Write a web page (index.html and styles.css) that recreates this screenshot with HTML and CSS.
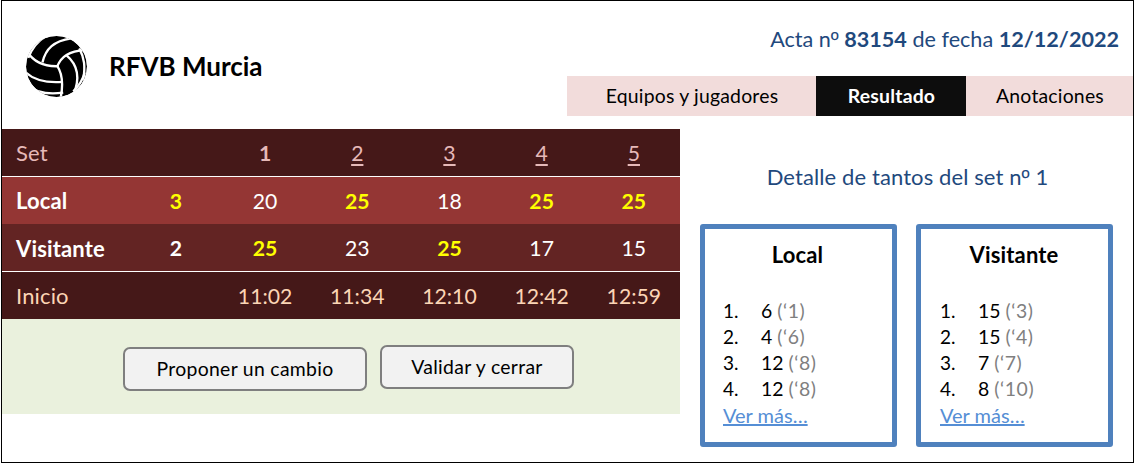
FILE: index.html
```html
<!DOCTYPE html>
<html lang="es">
<head>
<meta charset="utf-8">
<title>RFVB Murcia</title>
<link rel="stylesheet" href="styles.css">
</head>
<body>
<div class="frame">
  <header class="header">
    <div class="brand">
      <svg class="ball" viewBox="76 102 188 188" aria-hidden="true">
        <defs><clipPath id="disc"><circle cx="170" cy="196" r="91"/></clipPath></defs>
        <g clip-path="url(#disc)">
          <circle cx="170" cy="196" r="91"/>
          <g class="seams">
            <path d="M78 145Q108 198 176 195"/>
            <path d="M172 196C184 166 206 150 256 147"/>
            <path d="M172 194Q195 228 182 292"/>
            <path d="M128 184C138 142 162 120 214 112"/>
            <path d="M86 170C96 142 110 122 140 104"/>
            <path d="M74 210C102 238 145 245 187 242"/>
            <path d="M80 252C112 276 150 280 190 274"/>
            <path d="M200 163C232 190 242 230 220 282"/>
            <path d="M238 142C254 172 256 196 250 236"/>
            <path d="M190 100Q226 110 250 146"/>
            <path d="M76 222Q90 254 122 280"/>
            <path d="M254 214Q246 246 220 270"/>
          </g>
        </g>
      </svg>
      <h1 class="brand-name">RFVB Murcia</h1>
    </div>
    <div class="header-right">
      <p class="record">Acta n<span class="ordinal">º</span> <b>83154</b> de fecha <b>12/12/2022</b></p>
      <nav class="tabs">
        <a class="tab tab-teams">Equipos y jugadores</a>
        <a class="tab tab-active">Resultado</a>
        <a class="tab tab-notes">Anotaciones</a>
      </nav>
    </div>
  </header>
  <main class="main">
    <section class="score">
      <div class="row row-sets"><span class="name">Set</span><span></span><b>1</b><u>2</u><u>3</u><u>4</u><u>5</u></div>
      <div class="row row-local"><b class="name">Local</b><b class="win">3</b><span>20</span><b class="win">25</b><span>18</span><b class="win">25</b><b class="win">25</b></div>
      <div class="row row-visitor"><b class="name">Visitante</b><b>2</b><b class="win">25</b><span>23</span><b class="win">25</b><span>17</span><span>15</span></div>
      <div class="row row-start"><span class="name">Inicio</span><span></span><span>11:02</span><span>11:34</span><span>12:10</span><span>12:42</span><span>12:59</span></div>
      <div class="actions">
        <button class="button button-propose">Proponer un cambio</button>
        <button class="button button-close">Validar y cerrar</button>
      </div>
    </section>
    <section class="detail">
      <h2 class="detail-title">Detalle de tantos del set n<span class="ordinal">º</span> 1</h2>
      <div class="cards">
        <article class="card">
          <h3 class="card-title">Local</h3>
          <div class="points">
            <div class="point"><span>1.</span><span class="value">6 <i>(‘1)</i></span></div>
            <div class="point"><span>2.</span><span class="value">4 <i>(‘6)</i></span></div>
            <div class="point"><span>3.</span><span class="value">12 <i>(‘8)</i></span></div>
            <div class="point"><span>4.</span><span class="value">12 <i>(‘8)</i></span></div>
            <a class="more">Ver más…</a>
          </div>
        </article>
        <article class="card card-visitor">
          <h3 class="card-title">Visitante</h3>
          <div class="points">
            <div class="point"><span>1.</span><span class="value">15 <i>(‘3)</i></span></div>
            <div class="point"><span>2.</span><span class="value">15 <i>(‘4)</i></span></div>
            <div class="point"><span>3.</span><span class="value">7 <i>(‘7)</i></span></div>
            <div class="point"><span>4.</span><span class="value">8 <i>(‘10)</i></span></div>
            <a class="more">Ver más…</a>
          </div>
        </article>
      </div>
    </section>
  </main>
</div>
</body>
</html>
```
FILE: styles.css
```css
* { box-sizing: border-box; }
body { margin: 0; background: #fff; color: #000; font-family: Lato, "Liberation Sans", sans-serif; overflow: hidden; }
h1, h2, h3, p { margin: 0; }
.frame { width: 1133px; height: 463px; margin-left: 1px; border: 1px solid #000; }
.header { display: flex; justify-content: space-between; height: 128px; }
.brand { display: flex; align-items: center; padding-left: 23px; gap: 21px; height: 130px; }
.ball { width: 63px; height: 63px; }
.seams { fill: none; stroke: #fff; stroke-width: 7; }
.brand-name { font-size: 26px; line-height: 30px; font-weight: 700; }
.header-right { width: 566px; }
.record { height: 75px; padding: 23px 14px 0 0; text-align: right; font-size: 21.6px; line-height: 30px; color: #1f497d; white-space: nowrap; }
.ordinal { font-family: "Liberation Sans", sans-serif; line-height: 1; }
.tabs { display: grid; grid-template-columns: 249px 150px 1fr; height: 40px; }
.tab { background: #f2dcdb; font-size: 19.4px; letter-spacing: 0.2px; line-height: 40px; text-align: center; padding-left: 1px; }
.tab-active { background: #0d0d0d; color: #fff; font-weight: 700; }
.main { display: flex; }
.score { width: 678px; }
.row { display: grid; grid-template-columns: 131px 86px repeat(5, 92.2px); height: 47px; line-height: 48px; font-size: 21.2px; text-align: center; color: #fff; }
.name { text-align: left; padding-left: 14px; font-size: 22px; letter-spacing: 0.15px; }
.row-sets { height: 48px; background: #451818; color: #e6b9b8; border-bottom: 1px solid #fff; }
.row-sets u { text-decoration-thickness: 2px; text-underline-offset: 3px; }
.row-local { background: #943634; }
.row-visitor { height: 48px; line-height: 49px; background: #632423; border-bottom: 1px solid #fff; }
.row-start { background: #451818; color: #fcd5b5; }
.win { color: #ff0; }
.actions { display: flex; justify-content: center; gap: 13px; height: 95px; padding: 26px 0 0 15px; background: #eaf1dd; }
.button { height: 44px; padding: 0; border: 2px solid #7f7f7f; border-radius: 7px; background: #f2f2f2; color: #000; font: 19.4px/40px Lato, "Liberation Sans", sans-serif; letter-spacing: 0.3px; white-space: nowrap; }
.button-propose { width: 244px; margin-top: 2px; padding-bottom: 3px; }
.button-close { width: 194px; }
.detail { flex: 1; padding: 33px 20px 0; }
.detail-title { font-size: 22px; letter-spacing: 0.1px; line-height: 30px; font-weight: 400; color: #1f497d; text-align: center; padding-left: 2px; }
.cards { display: flex; gap: 19px; margin-top: 32px; }
.card { width: 197px; height: 223px; border: 5px solid #4f81bd; border-radius: 3px; padding: 11px 0 0 18px; }
.card-visitor { padding-left: 19px; }
.card-title { margin-left: -20px; text-align: center; font-size: 22px; letter-spacing: 0.15px; line-height: 30px; }
.points { margin-top: 28px; font-size: 19px; line-height: 26px; }
.point { display: grid; grid-template-columns: 38px 1fr; }
.value { font-size: 19.4px; }
.point i { font-style: normal; color: #7f7f7f; letter-spacing: 0.6px; }
.more { color: #558ed5; text-decoration: underline; font-size: 20px; }
```
